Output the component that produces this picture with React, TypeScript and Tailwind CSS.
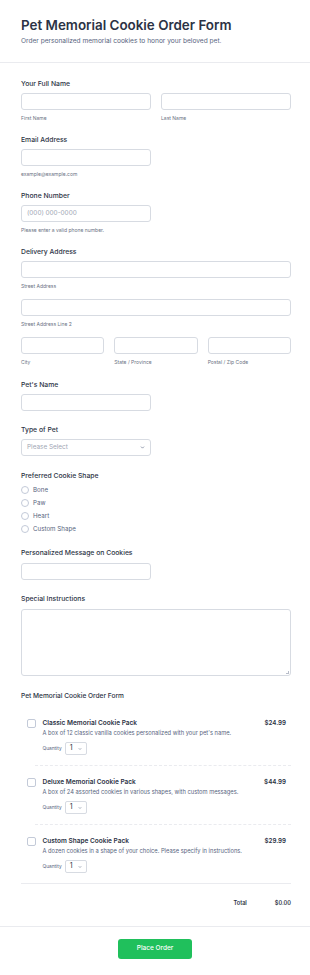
import { ChevronDown } from "lucide-react";

const label = "text-[6.8px] font-medium text-[#2c3345] leading-[10px]";
const sub = "text-[5px] text-[#6b7384] leading-[8px] mt-[4px]";
const input = "h-[17px] rounded-[3px] border border-[#d7dbe2] bg-white";

const products = [
  {
    name: "Classic Memorial Cookie Pack",
    desc: "A box of 12 classic vanilla cookies personalized with your pet's name.",
    price: "$24.99",
  },
  {
    name: "Deluxe Memorial Cookie Pack",
    desc: "A box of 24 assorted cookies in various shapes, with custom messages.",
    price: "$44.99",
  },
  {
    name: "Custom Shape Cookie Pack",
    desc: "A dozen cookies in a shape of your choice. Please specify in instructions.",
    price: "$29.99",
  },
];

const Field = ({ title, gap = "mt-[13px]", children }: any) => (
  <div className={gap}>
    <p className={label}>{title}</p>
    <div className="mt-[4px]">{children}</div>
  </div>
);

export default function App() {
  return (
    <div className="w-[310px] min-h-[975px] bg-white" style={{ fontFamily: "Inter, 'Noto Sans', sans-serif" }}>
      <div className="pl-[21px] pr-[19px] pt-[16px] pb-[16px] border-b border-[#eaebef]">
        <h1 className="text-[13.4px] font-semibold text-[#2c3345] leading-[18px]">
          Pet Memorial Cookie Order Form
        </h1>
        <p className="text-[6.6px] text-[#57647e] leading-[10px] mt-[2px]">
          Order personalized memorial cookies to honor your beloved pet.
        </p>
      </div>

      <div className="pl-[21px] pr-[19px]">
        <Field title="Your Full Name" gap="mt-[16px]">
          <div className="flex gap-[10px]">
            <div className="flex-1">
              <div className={input} />
              <p className={sub}>First Name</p>
            </div>
            <div className="flex-1">
              <div className={input} />
              <p className={sub}>Last Name</p>
            </div>
          </div>
        </Field>

        <Field title="Email Address">
          <div className={`${input} w-[130px]`} />
          <p className={sub}>example@example.com</p>
        </Field>

        <Field title="Phone Number">
          <div className={`${input} w-[130px] flex items-center px-[5px]`}>
            <span className="text-[6.4px] text-[#a0a6b4]">(000) 000-0000</span>
          </div>
          <p className={sub}>Please enter a valid phone number.</p>
        </Field>

        <Field title="Delivery Address">
          <div className={input} />
          <p className={sub}>Street Address</p>
          <div className={`${input} mt-[9px]`} />
          <p className={sub}>Street Address Line 2</p>
          <div className="flex gap-[10px] mt-[9px]">
            <div className="flex-1">
              <div className={input} />
              <p className={sub}>City</p>
            </div>
            <div className="flex-1">
              <div className={input} />
              <p className={sub}>State / Province</p>
            </div>
            <div className="flex-1">
              <div className={input} />
              <p className={sub}>Postal / Zip Code</p>
            </div>
          </div>
        </Field>

        <Field title="Pet's Name" gap="mt-[14px]">
          <div className={`${input} w-[130px]`} />
        </Field>

        <Field title="Type of Pet" gap="mt-[14px]">
          <div className={`${input} w-[130px] flex items-center justify-between pl-[5px] pr-[5px]`}>
            <span className="text-[6.4px] text-[#a0a6b4]">Please Select</span>
            <ChevronDown className="w-[5px] h-[5px] text-[#57647e]" strokeWidth={3} />
          </div>
        </Field>

        <Field title="Preferred Cookie Shape" gap="mt-[15px]">
          <div className="flex flex-col gap-[4px]">
            {["Bone", "Paw", "Heart", "Custom Shape"].map((o) => (
              <div key={o} className="flex items-center gap-[4px] h-[9px]">
                <span className="w-[8px] h-[8px] rounded-full border border-[#c3cad8] bg-white" />
                <span className="text-[6.2px] text-[#57647e] leading-[9px]">{o}</span>
              </div>
            ))}
          </div>
        </Field>

        <div className="mt-[15px]">
          <p className={label}>Personalized Message on Cookies</p>
          <div className={`${input} w-[130px] mt-[5px]`} />
        </div>

        <div className="mt-[14px]">
          <p className={label}>Special Instructions</p>
          <div className="relative mt-[5px] h-[67px] rounded-[3px] border border-[#d7dbe2]">
            <span className="absolute right-[1px] bottom-[1px] w-[3px] h-[3px] border-r border-b border-[#b8bdc9]" />
          </div>
        </div>

        <div className="mt-[15px]">
          <p className="text-[6.6px] font-medium text-[#2c3345] leading-[10px]">
            Pet Memorial Cookie Order Form
          </p>
          <div className="mt-[17px] border-b border-[#eaebef]">
            {products.map((p, i) => (
              <div key={p.name}>
                <div className={`flex gap-[7px] pl-[6px] ${i > 0 ? "pt-[11px]" : ""} pb-[10px]`}>
                  <span className="mt-[1px] w-[8.5px] h-[8.5px] rounded-[2px] border border-[#c3cad8] shrink-0" />
                  <div className="flex-1 pr-[5px]">
                    <div className="flex justify-between">
                      <span className="text-[6.5px] font-semibold text-[#2c3345] leading-[10px]">{p.name}</span>
                      <span className="text-[6.2px] font-semibold text-[#2c3345] leading-[10px]">{p.price}</span>
                    </div>
                    <p className="text-[5.75px] text-[#57647e] leading-[10px]">{p.desc}</p>
                    <div className="flex items-center gap-[3px] mt-[4px]">
                      <span className="text-[4.8px] text-[#57647e]">Quantity</span>
                      <div className="h-[13px] w-[22px] rounded-[2px] border border-[#d7dbe2] flex items-center justify-between pl-[4px] pr-[4px]">
                        <span className="text-[7px] text-[#2c3345]">1</span>
                        <ChevronDown className="w-[4px] h-[4px] text-[#57647e]" strokeWidth={3} />
                      </div>
                    </div>
                  </div>
                </div>
                {i < 2 && <div className="ml-[14px] border-b border-dashed border-[#eaebef]" />}
              </div>
            ))}
          </div>
          <div className="flex justify-end gap-[28px] pt-[14px] pb-[18px]">
            <span className="text-[5.6px] font-semibold text-[#2c3345] leading-[10px]">Total</span>
            <span className="text-[5.6px] font-semibold text-[#2c3345] leading-[10px]">$0.00</span>
          </div>
        </div>
      </div>

      <div className="border-t border-[#eaebef] pt-[12px] flex justify-center">
        <button className="w-[74px] h-[20px] rounded-[3px] bg-[#20c05c] text-white text-[6.5px] font-medium">
          Place Order
        </button>
      </div>
    </div>
  );
}
